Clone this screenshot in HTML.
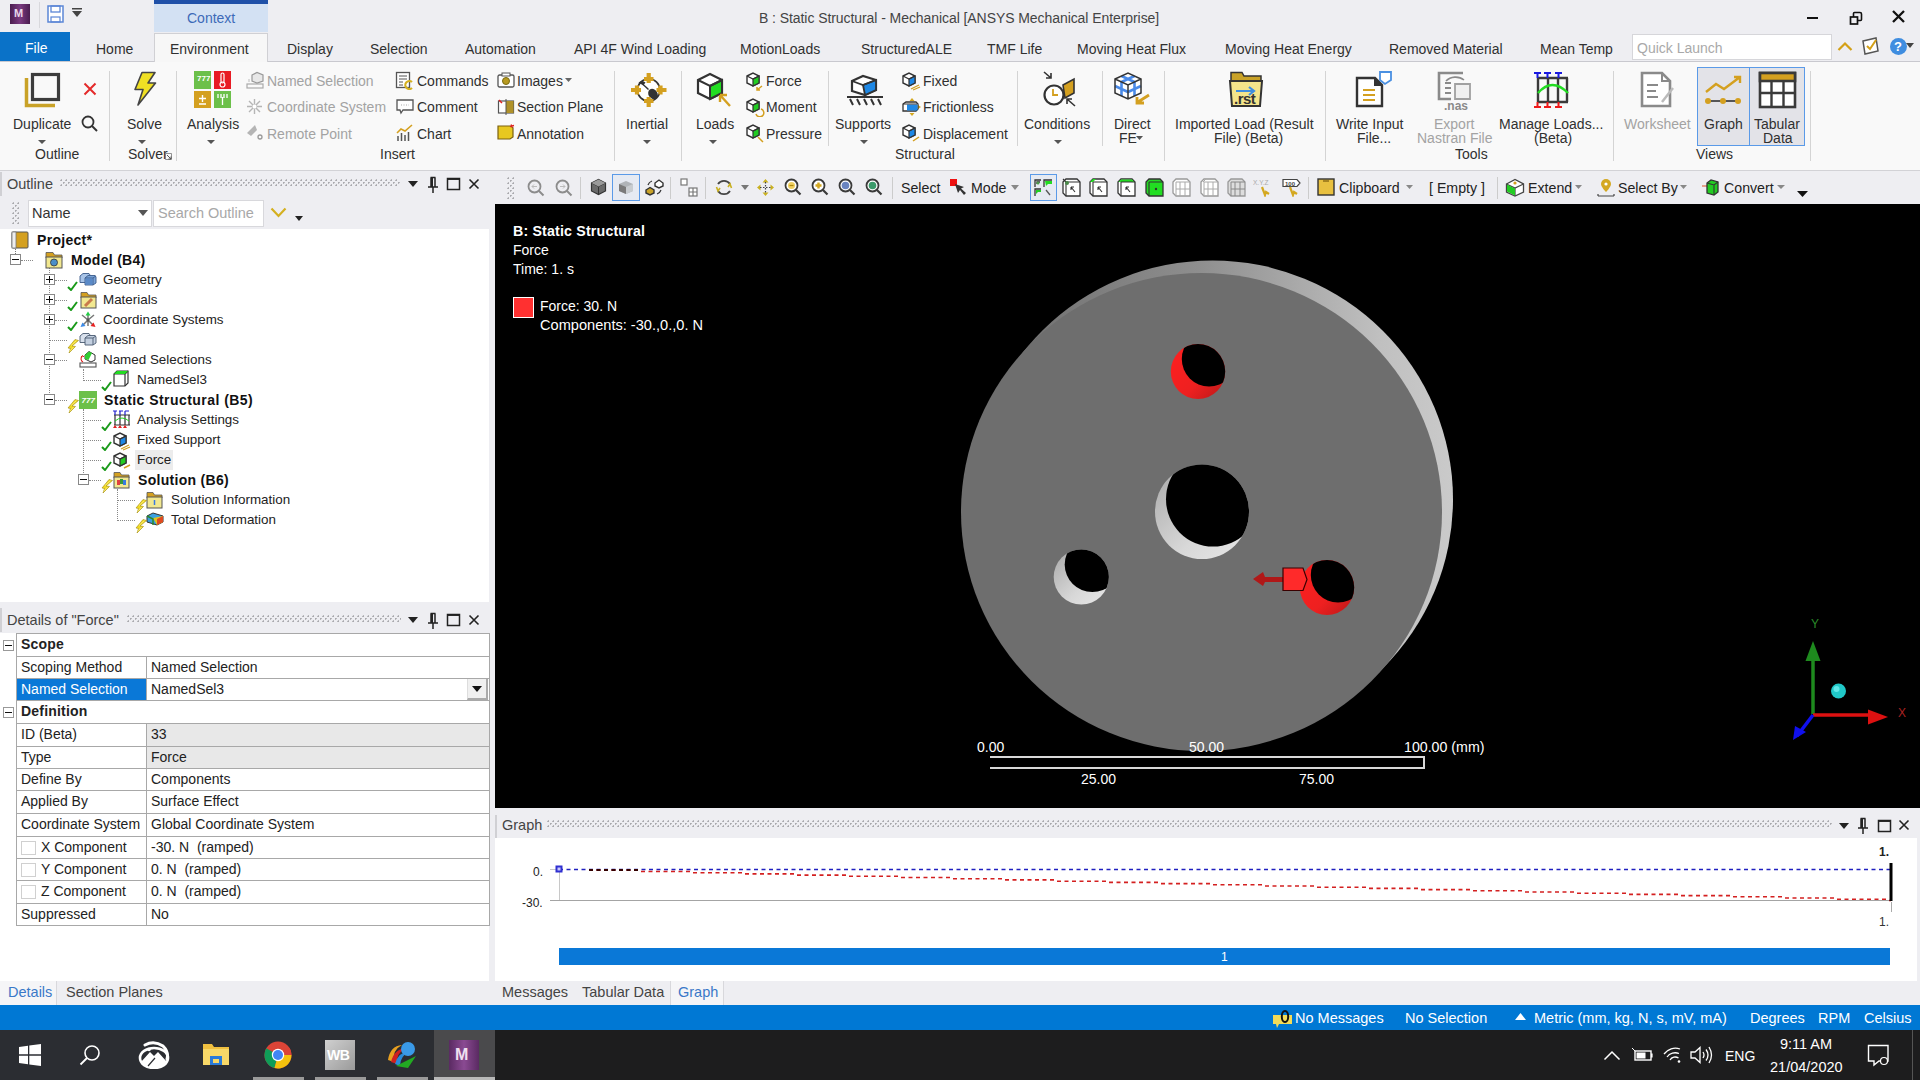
<!DOCTYPE html>
<html><head><meta charset="utf-8">
<style>
*{margin:0;padding:0;box-sizing:border-box}
html,body{width:1920px;height:1080px;overflow:hidden;background:#eeeef2;font-family:"Liberation Sans",sans-serif;color:#303030;font-size:14px}
.a{position:absolute}
.t{position:absolute;white-space:nowrap;line-height:1;font-size:14px}
.tr{font-size:13.4px;color:#222}
.tb{font-size:14.2px;color:#222}
.ts{font-size:14.5px;color:#fff}
</style></head><body>
<!-- TITLE BAR -->
<div class="a" style="left:0;top:0;width:1920px;height:32px;background:#eeeef2"></div>
<div class="a" style="left:10px;top:4px;width:20px;height:20px;background:linear-gradient(90deg,#4a1d4f,#7a3a80 50%,#4a1d4f)"></div>
<div class="t" style="left:14px;top:8px;font-size:11px;font-weight:bold;color:#e8d8ea">M</div>
<div class="a" style="left:39px;top:2px;width:1px;height:26px;background:#d8d8dc"></div>
<svg class="a" style="left:47px;top:5px" width="18" height="18" viewBox="0 0 18 18"><rect x="1" y="1" width="15" height="16" fill="#fff" stroke="#5b86d6" stroke-width="1.5"/><rect x="4" y="1" width="9" height="6" fill="none" stroke="#5b86d6" stroke-width="1.3"/><rect x="4" y="12" width="9" height="5" fill="none" stroke="#5b86d6" stroke-width="1.2"/></svg>
<svg class="a" style="left:71px;top:8px" width="12" height="10" viewBox="0 0 12 10"><rect x="1" y="0" width="10" height="1.5" fill="#444"/><path d="M1 3 L11 3 L6 9 Z" fill="#444"/></svg>
<div class="a" style="left:154px;top:0;width:114px;height:32px;background:#d3e1f3"></div>
<div class="a" style="left:154px;top:0;width:114px;height:4px;background:#1f50a8"></div>
<div class="t" style="left:187px;top:11px;font-size:14px;color:#3d6ab8">Context</div>
<div class="t" style="left:759px;top:11px;font-size:14px;color:#444;letter-spacing:-0.07px">B : Static Structural - Mechanical [ANSYS Mechanical Enterprise]</div>
<div class="a" style="left:1807px;top:17px;width:11px;height:2px;background:#111"></div>
<svg class="a" style="left:1849px;top:11px" width="14" height="14" viewBox="0 0 14 14"><rect x="1.5" y="6" width="7" height="7" fill="none" stroke="#111" stroke-width="1.7"/><path d="M4.5 6 V2.5 Q4.5 1.5 5.5 1.5 H11 Q12.5 1.5 12.5 3 V8.5 Q12.5 9.5 11.5 9.5 H8.5" fill="none" stroke="#111" stroke-width="1.6"/></svg>
<svg class="a" style="left:1891px;top:9px" width="15" height="15" viewBox="0 0 15 15"><path d="M2 2 L13 13 M13 2 L2 13" stroke="#111" stroke-width="2.3"/></svg>

<!-- TABS ROW -->
<div class="a" style="left:0;top:61px;width:1920px;height:1px;background:#c9c9cf"></div>
<div class="a" style="left:0;top:32px;width:70px;height:29px;background:#0a72c8"></div>
<div class="t" style="left:25px;top:41px;font-size:14px;color:#fff">File</div>
<div class="a" style="left:154px;top:33px;width:114px;height:29px;background:#f7f7f7;border:1px solid #d0d0d4;border-bottom:none"></div>
<div class="t" style="left:96px;top:42px;font-size:14px;color:#303030">Home</div>
<div class="t" style="left:170px;top:42px;font-size:14px;color:#303030">Environment</div>
<div class="t" style="left:287px;top:42px;font-size:14px;color:#303030">Display</div>
<div class="t" style="left:370px;top:42px;font-size:14px;color:#303030">Selection</div>
<div class="t" style="left:465px;top:42px;font-size:14px;color:#303030">Automation</div>
<div class="t" style="left:574px;top:42px;font-size:14px;color:#303030">API 4F Wind Loading</div>
<div class="t" style="left:740px;top:42px;font-size:14px;color:#303030">MotionLoads</div>
<div class="t" style="left:861px;top:42px;font-size:14px;color:#303030">StructuredALE</div>
<div class="t" style="left:987px;top:42px;font-size:14px;color:#303030">TMF Life</div>
<div class="t" style="left:1077px;top:42px;font-size:14px;color:#303030">Moving Heat Flux</div>
<div class="t" style="left:1225px;top:42px;font-size:14px;color:#303030">Moving Heat Energy</div>
<div class="t" style="left:1389px;top:42px;font-size:14px;color:#303030">Removed Material</div>
<div class="t" style="left:1540px;top:42px;font-size:14px;color:#303030">Mean Temp</div>
<div class="a" style="left:1632px;top:34px;width:200px;height:26px;background:#fff;border:1px solid #d6d6da"></div>
<div class="t" style="left:1637px;top:41px;font-size:14px;color:#a9a9a9">Quick Launch</div>
<svg class="a" style="left:1837px;top:40px" width="16" height="12" viewBox="0 0 16 12"><path d="M1.5 10 L8 3.5 L14.5 10" fill="none" stroke="#d4a017" stroke-width="2.2"/></svg>
<svg class="a" style="left:1861px;top:36px" width="20" height="20" viewBox="0 0 20 20"><path d="M2 5 L15 2 L17 15 L4 18 Z" fill="#fff" stroke="#555" stroke-width="1.5"/><path d="M6 10 L9 13 L15 4" fill="none" stroke="#d4a017" stroke-width="2"/></svg>
<div class="a" style="left:1890px;top:38px;width:17px;height:17px;border-radius:50%;background:#3f8de0"></div>
<div class="t" style="left:1894px;top:40px;font-size:13px;font-weight:bold;color:#fff">?</div>
<svg class="a" style="left:1906px;top:43px" width="8" height="6" viewBox="0 0 8 6"><path d="M0 0 H8 L4 5 Z" fill="#444"/></svg>
<!-- RIBBON -->
<div class="a" style="left:0;top:62px;width:1920px;height:108px;background:#f9f9f9"></div>
<div class="a" style="left:0;top:170px;width:1920px;height:1px;background:#d2d2d6"></div>
<svg width="0" height="0" style="position:absolute">
<defs>
<g id="cubeG"><path d="M2 5 L8 2 L14 5 L14 12 L8 15 L2 12 Z" fill="#fff" stroke="#333" stroke-width="1.4"/><path d="M8 8 L14 5 L14 12 L8 15 Z" fill="#22cc22" stroke="#333" stroke-width="1.2"/><path d="M2 5 L8 8 L14 5" fill="none" stroke="#333" stroke-width="1.2"/></g>
<g id="cubeB"><path d="M2 5 L8 2 L14 5 L14 12 L8 15 L2 12 Z" fill="#fff" stroke="#333" stroke-width="1.4"/><path d="M8 8 L14 5 L14 12 L8 15 Z" fill="#1e88e5" stroke="#333" stroke-width="1.2"/><path d="M2 5 L8 8 L14 5" fill="none" stroke="#333" stroke-width="1.2"/></g>
<g id="arr"><path d="M0 0 H8 L4 4 Z" fill="#555"/></g>
<g id="chk"><path d="M1 7 L4 10 L10 2" fill="none" stroke="#1a9a1a" stroke-width="2"/></g>
<g id="bolt"><path d="M8 0.5 L11.5 1.5 L5 7 L8.5 7.5 L2 14 L3.5 9.5 L1 9 Z" fill="#f0d820" stroke="#a08a10" stroke-width="0.6"/><path d="M9.5 1.5 L4 6.5 M6.5 8 L2.5 12.5" stroke="#fff8a0" stroke-width="0.6"/></g>
</defs></svg>
<!-- separators -->
<div class="a" style="left:109px;top:71px;width:1px;height:90px;background:#d4d4d4"></div>
<div class="a" style="left:176px;top:71px;width:1px;height:90px;background:#d4d4d4"></div>
<div class="a" style="left:614px;top:71px;width:1px;height:90px;background:#d4d4d4"></div>
<div class="a" style="left:681px;top:71px;width:1px;height:90px;background:#d4d4d4"></div>
<div class="a" style="left:828px;top:71px;width:1px;height:75px;background:#d4d4d4"></div>
<div class="a" style="left:1017px;top:71px;width:1px;height:75px;background:#d4d4d4"></div>
<div class="a" style="left:1102px;top:71px;width:1px;height:75px;background:#d4d4d4"></div>
<div class="a" style="left:1164px;top:71px;width:1px;height:90px;background:#d4d4d4"></div>
<div class="a" style="left:1325px;top:71px;width:1px;height:90px;background:#d4d4d4"></div>
<div class="a" style="left:1613px;top:71px;width:1px;height:90px;background:#d4d4d4"></div>
<div class="a" style="left:1810px;top:71px;width:1px;height:90px;background:#d4d4d4"></div>

<!-- Outline group -->
<svg class="a" style="left:24px;top:72px" width="38" height="37" viewBox="0 0 38 37"><path d="M2.5 6 V33.5 H31" fill="none" stroke="#c9a227" stroke-width="3.5"/><rect x="8.5" y="2.5" width="26" height="25" fill="#f9f9f9" stroke="#3c3c3c" stroke-width="3.2"/></svg>
<svg class="a" style="left:83px;top:82px" width="14" height="14" viewBox="0 0 14 14"><path d="M1.5 1.5 L12.5 12.5 M12.5 1.5 L1.5 12.5" stroke="#e42a2a" stroke-width="2"/></svg>
<svg class="a" style="left:81px;top:115px" width="18" height="18" viewBox="0 0 18 18"><circle cx="7" cy="7" r="5.5" fill="none" stroke="#333" stroke-width="1.8"/><path d="M11 11 L16 16" stroke="#333" stroke-width="2"/></svg>
<div class="t" style="left:13px;top:117px">Duplicate</div>
<svg class="a" style="left:38px;top:140px" width="8" height="4"><use href="#arr"/></svg>
<div class="t" style="left:35px;top:147px">Outline</div>
<!-- Solver group -->
<svg class="a" style="left:133px;top:71px" width="24" height="36" viewBox="0 0 24 36"><path d="M9 1.5 L22 1.5 L15 12 L22.5 12 L5 34 L10 18.5 L2 18.5 Z" fill="#f0e024" stroke="#444" stroke-width="1.6" stroke-linejoin="round"/></svg>
<div class="t" style="left:127px;top:117px">Solve</div>
<svg class="a" style="left:138px;top:140px" width="8" height="4"><use href="#arr"/></svg>
<div class="t" style="left:128px;top:147px">Solver</div>
<svg class="a" style="left:165px;top:153px" width="7" height="7" viewBox="0 0 7 7"><path d="M0.5 0.5 H6.5 V6.5 H0.5 Z" fill="none" stroke="#777" stroke-width="0.8"/><path d="M2 2 L6 6 M6 3.5 V6 H3.5" stroke="#555" stroke-width="1" fill="none"/></svg>
<!-- Insert group -->
<div class="a" style="left:194px;top:71px;width:17px;height:18px;background:#6cc04a"></div>
<div class="a" style="left:214px;top:71px;width:17px;height:18px;background:#e81c24"></div>
<div class="a" style="left:194px;top:91px;width:17px;height:17px;background:#d4a020"></div>
<div class="a" style="left:214px;top:91px;width:17px;height:17px;background:#6cc04a"></div>
<div class="t" style="left:197px;top:75px;font-size:8px;color:#fff;font-weight:bold">777</div>
<svg class="a" style="left:217px;top:72px" width="11" height="16" viewBox="0 0 11 16"><rect x="4" y="1" width="3" height="10" rx="1.5" fill="none" stroke="#fff" stroke-width="1.2"/><circle cx="5.5" cy="12.5" r="2.5" fill="none" stroke="#fff" stroke-width="1.2"/></svg>
<svg class="a" style="left:196px;top:93px" width="13" height="13" viewBox="0 0 13 13"><path d="M6.5 2 V9 M3 5.5 H10 M3 11 H10" stroke="#fff" stroke-width="1.4"/></svg>
<svg class="a" style="left:216px;top:93px" width="13" height="13" viewBox="0 0 13 13"><path d="M2 1 V5 M5 1 V5 M8 1 V5 M11 1 V5 M6.5 4 V12" stroke="#fff" stroke-width="1.3"/></svg>
<div class="t" style="left:187px;top:117px">Analysis</div>
<svg class="a" style="left:207px;top:140px" width="8" height="4"><use href="#arr"/></svg>

<svg class="a" style="left:246px;top:71px" width="19" height="18" viewBox="0 0 19 18"><rect x="1" y="13" width="16" height="4" fill="none" stroke="#aaa" stroke-width="1.2"/><path d="M6 4 L11 1.5 L17 4 L17 10 L11 12 L6 10 Z" fill="#e8e8e8" stroke="#999" stroke-width="1.2"/><path d="M3 8 V11" stroke="#bbb"/></svg>
<div class="t" style="left:267px;top:74px;color:#a3a3a3">Named Selection</div>
<svg class="a" style="left:246px;top:98px" width="17" height="17" viewBox="0 0 17 17"><path d="M8.5 1 V16 M1 8.5 H16 M3 3 L14 14 M14 3 L3 14" stroke="#b5b5b5" stroke-width="1.4"/><circle cx="8.5" cy="8.5" r="2" fill="#fff"/></svg>
<div class="t" style="left:267px;top:100px;color:#a3a3a3">Coordinate System</div>
<svg class="a" style="left:246px;top:124px" width="18" height="17" viewBox="0 0 18 17"><path d="M1 9 L9 1 L11 6 L5 12 Z" fill="#b5b5b5"/><circle cx="14" cy="13" r="2" fill="none" stroke="#999" stroke-width="1.3"/></svg>
<div class="t" style="left:267px;top:127px;color:#a3a3a3">Remote Point</div>

<svg class="a" style="left:395px;top:71px" width="19" height="19" viewBox="0 0 19 19"><rect x="1.5" y="1.5" width="13" height="15" fill="#fff" stroke="#555" stroke-width="1.3"/><path d="M4 5 H12 M4 8 H12 M4 11 H8 M4 14 H8" stroke="#555" stroke-width="1"/><path d="M17 11 A4 4 0 1 0 17 17" fill="none" stroke="#d4b020" stroke-width="2.2"/></svg>
<div class="t" style="left:417px;top:74px">Commands</div>
<svg class="a" style="left:396px;top:99px" width="18" height="16" viewBox="0 0 18 16"><path d="M1 1 H17 V11 H7 L5 14 L4 11 H1 Z" fill="#fff" stroke="#555" stroke-width="1.3"/><path d="M5 6 H13" stroke="#aaa" stroke-dasharray="1 1.5"/></svg>
<div class="t" style="left:417px;top:100px">Comment</div>
<svg class="a" style="left:396px;top:124px" width="18" height="18" viewBox="0 0 18 18"><path d="M2 17 V12 M5.5 17 V9 M9 17 V11 M12.5 17 V8" stroke="#555" stroke-width="1.5"/><path d="M1 9 L5 5 L9 7 L16 1" fill="none" stroke="#d4a020" stroke-width="1.6"/></svg>
<div class="t" style="left:417px;top:127px">Chart</div>

<svg class="a" style="left:497px;top:72px" width="18" height="16" viewBox="0 0 18 16"><rect x="1" y="3" width="16" height="12" rx="1.5" fill="#fff" stroke="#555" stroke-width="1.3"/><rect x="5" y="1" width="8" height="3" fill="#fff" stroke="#555" stroke-width="1"/><circle cx="9" cy="9" r="3.5" fill="#b89a20" stroke="#7a6a10"/></svg>
<div class="t" style="left:517px;top:74px">Images</div>
<svg class="a" style="left:565px;top:78px" width="7" height="4"><path d="M0 0 H7 L3.5 4 Z" fill="#666"/></svg>
<svg class="a" style="left:497px;top:98px" width="18" height="18" viewBox="0 0 18 18"><rect x="1.5" y="3" width="15" height="12" fill="#fff" stroke="#555" stroke-width="1.2"/><path d="M9 3 H16.5 V15 H9 Z" fill="#b0922a"/><path d="M9 1 V17" stroke="#555"/><path d="M2 2 L5 5" stroke="#e02020" stroke-width="1.5"/></svg>
<div class="t" style="left:517px;top:100px">Section Plane</div>
<svg class="a" style="left:497px;top:124px" width="18" height="16" viewBox="0 0 18 16"><path d="M1 2 H14 L16 4 V13 L13 15 H1 Z" fill="#e8c820" stroke="#7a6010" stroke-width="1.2"/><path d="M14 0.5 L16 3.5 M17 1.5 L13 2.5" stroke="#e02020" stroke-width="1.3"/></svg>
<div class="t" style="left:517px;top:127px">Annotation</div>
<div class="t" style="left:380px;top:147px">Insert</div>

<!-- Inertial -->
<svg class="a" style="left:630px;top:72px" width="37" height="36" viewBox="0 0 37 36"><circle cx="18.7" cy="18" r="11.2" fill="#fff" stroke="#333" stroke-width="1.6"/><path d="M8.5 10.5 Q12 7.5 15.5 10.5 L14 12.5 Q17 15 19 17 L18 18 Q15 15 12.5 13 Z" fill="#333"/><ellipse cx="23" cy="22" rx="4.5" ry="5.5" transform="rotate(-35 23 22)" fill="#333"/><path d="M18.7 1 V11 M14 7 H23.5 M18.7 25 V35 M14 29 H23.5 M1 18 H11 M7 13.5 V22.5 M26.5 18 H36.5 M30.5 13.5 V22.5" stroke="#d4a020" stroke-width="4.2"/></svg>
<div class="t" style="left:626px;top:117px">Inertial</div>
<svg class="a" style="left:643px;top:140px" width="8" height="4"><use href="#arr"/></svg>
<!-- Loads -->
<svg class="a" style="left:696px;top:72px" width="37" height="36" viewBox="0 0 37 36"><path d="M2 8 L14 2 L26 8 L26 21 L14 27 L2 21 Z" fill="#fff" stroke="#333" stroke-width="2.2"/><path d="M14 14 L26 8 L26 21 L14 27 Z" fill="#22dd22" stroke="#333" stroke-width="2"/><path d="M2 8 L14 14 L26 8" fill="none" stroke="#333" stroke-width="2"/><path d="M24 23 L34 34 M24 23 L24 30 M24 23 L31 23" stroke="#d4a020" stroke-width="2.4" fill="none"/></svg>
<div class="t" style="left:696px;top:117px">Loads</div>
<svg class="a" style="left:709px;top:140px" width="8" height="4"><use href="#arr"/></svg>
<svg class="a" style="left:745px;top:71px" width="20" height="20" viewBox="0 0 20 20"><use href="#cubeG"/><path d="M17 15 L12 19 M12 16 V19 H15" stroke="#d4a020" stroke-width="1.5" fill="none"/></svg>
<div class="t" style="left:766px;top:74px">Force</div>
<svg class="a" style="left:745px;top:97px" width="20" height="20" viewBox="0 0 20 20"><use href="#cubeG"/><path d="M16 12 A4 4 0 1 1 11 17" stroke="#d4a020" stroke-width="1.5" fill="none"/></svg>
<div class="t" style="left:766px;top:100px">Moment</div>
<svg class="a" style="left:745px;top:123px" width="20" height="20" viewBox="0 0 20 20"><use href="#cubeG"/><path d="M13 14 L18 19" stroke="#d4a020" stroke-width="1.5"/></svg>
<div class="t" style="left:766px;top:127px">Pressure</div>
<!-- Supports -->
<svg class="a" style="left:846px;top:74px" width="38" height="34" viewBox="0 0 38 34"><path d="M6 7 L17 2 L30 6 L30 16 L19 21 L6 17 Z" fill="#fff" stroke="#333" stroke-width="2.2"/><path d="M17 11 L30 6 L30 16 L19 21 Z" fill="#1e88e5" stroke="#333" stroke-width="1.8"/><path d="M6 7 L17 11 L30 6" fill="none" stroke="#333" stroke-width="1.8"/><path d="M1 23 H37" stroke="#333" stroke-width="2.2"/><path d="M4 25 L7 31 M11 25 L14 31 M18 25 L21 31 M25 25 L28 31 M32 25 L35 31" stroke="#333" stroke-width="2"/></svg>
<div class="t" style="left:835px;top:117px">Supports</div>
<svg class="a" style="left:860px;top:140px" width="8" height="4"><use href="#arr"/></svg>
<svg class="a" style="left:901px;top:71px" width="20" height="20" viewBox="0 0 20 20"><use href="#cubeB"/><path d="M10 18 L18 14 M12 19 L19 16" stroke="#d4a020" stroke-width="1.3"/></svg>
<div class="t" style="left:923px;top:74px">Fixed</div>
<svg class="a" style="left:901px;top:97px" width="21" height="20" viewBox="0 0 21 20"><path d="M11 1 L8.5 4 H13.5 Z M11 19 L8.5 16 H13.5 Z M20 10 L17 8 V12 Z" fill="#d4a820"/><path d="M2 7 L5 5 H15 L17 7 V12 L15 14 H2 Z" fill="#fff" stroke="#333" stroke-width="1.3"/><path d="M6 7.5 H16.5 V13.5 H6 Z" fill="#1e88e5"/><path d="M2 7 H16" stroke="#333" stroke-width="1"/></svg>
<div class="t" style="left:923px;top:100px">Frictionless</div>
<svg class="a" style="left:901px;top:123px" width="20" height="20" viewBox="0 0 20 20"><use href="#cubeB"/><path d="M12 18 L18 14" stroke="#d4a020" stroke-width="1.5"/></svg>
<div class="t" style="left:923px;top:127px">Displacement</div>
<div class="t" style="left:895px;top:147px">Structural</div>
<!-- Conditions -->
<svg class="a" style="left:1041px;top:71px" width="36" height="37" viewBox="0 0 36 37"><path d="M22 14 L33 8 L33 22 L24 27 Z" fill="#d4a020" stroke="#333" stroke-width="1.6"/><circle cx="13" cy="24" r="9.5" fill="#fff" stroke="#333" stroke-width="2.2"/><path d="M12 18 V24 H17" stroke="#d4a020" stroke-width="1.8" fill="none"/><path d="M3 1 L10 7 M10 2 V7 H5" stroke="#333" stroke-width="1.6" fill="none"/><path d="M34 35 L26 28 M26 33 V28 H31" stroke="#333" stroke-width="1.6" fill="none"/></svg>
<div class="t" style="left:1024px;top:117px">Conditions</div>
<svg class="a" style="left:1054px;top:140px" width="8" height="4"><use href="#arr"/></svg>
<!-- Direct FE -->
<svg class="a" style="left:1113px;top:71px" width="38" height="37" viewBox="0 0 38 37"><path d="M2 8 L15 2 L28 8 L28 22 L15 28 L2 22 Z" fill="#fff"/><path d="M8.5 11 V25 M21.5 11 V25 M2 15 L15 21 L28 15 M8.5 5 L21.5 11 M21.5 5 L8.5 11" fill="none" stroke="#4a8ae8" stroke-width="2.6"/><path d="M2 8 L15 2 L28 8 L28 22 L15 28 L2 22 Z M2 8 L15 14 L28 8 M15 14 V28" fill="none" stroke="#333" stroke-width="1.5"/><path d="M36 24 L25 31 M24 26 V32 H31" stroke="#d4a020" stroke-width="2.8" fill="none"/></svg>
<div class="t" style="left:1114px;top:117px">Direct</div>
<div class="t" style="left:1119px;top:131px">FE</div>
<svg class="a" style="left:1136px;top:136px" width="7" height="4"><path d="M0 0 H7 L3.5 4 Z" fill="#555"/></svg>
<!-- Imported Load -->
<svg class="a" style="left:1228px;top:71px" width="36" height="37" viewBox="0 0 36 37"><path d="M3 1.5 H14 L16 5 H33 V10 H3 Z" fill="#c9a227" stroke="#333" stroke-width="1.5"/><path d="M2 10 H34 L32 35 H4 Z" fill="#f4e48a" stroke="#333" stroke-width="2"/><path d="M8 20 H26 M21 16 L26 20 L21 24" stroke="#3f8de0" stroke-width="2.2" fill="none"/><text x="6" y="33" font-family="Liberation Sans" font-size="15" font-weight="bold" fill="#333" letter-spacing="-0.5">.rst</text></svg>
<div class="t" style="left:1175px;top:117px">Imported Load (Result</div>
<div class="t" style="left:1214px;top:131px">File) (Beta)</div>
<!-- Write Input File -->
<svg class="a" style="left:1355px;top:71px" width="38" height="37" viewBox="0 0 38 37"><path d="M2 7 H20 L27 14 V35 H2 Z" fill="#fff" stroke="#333" stroke-width="2.4"/><path d="M20 7 V14 H27" fill="#333" stroke="#333" stroke-width="2"/><path d="M8 19 H20 M8 24 H20 M8 29 H20" stroke="#d4a020" stroke-width="2.2"/><path d="M25 1 H36 V9 L30 13 L25 9 Z" fill="#fff" stroke="#4a90e2" stroke-width="1.8"/></svg>
<div class="t" style="left:1336px;top:117px">Write Input</div>
<div class="t" style="left:1357px;top:131px">File...</div>
<!-- Export Nastran -->
<svg class="a" style="left:1437px;top:70px" width="36" height="41" viewBox="0 0 36 41"><path d="M26 3 H2 V29 H14" fill="none" stroke="#8a8a8a" stroke-width="2.6"/><path d="M8 13 H14 M8 18 H14 M8 23 H14" stroke="#8a8a8a" stroke-width="1.8"/><path d="M9 11 A12 10 0 0 1 27 10" fill="none" stroke="#8a8a8a" stroke-width="1.6"/><path d="M18 14 H33 V29 H18 Z" fill="#f0f0f0" stroke="#a0a0a0" stroke-width="1.8"/><text x="7" y="40" font-family="Liberation Sans" font-size="12" font-weight="bold" fill="#8a8a8a">.nas</text></svg>
<div class="t" style="left:1434px;top:117px;color:#a3a3a3">Export</div>
<div class="t" style="left:1417px;top:131px;color:#a3a3a3">Nastran File</div>
<div class="t" style="left:1455px;top:147px">Tools</div>
<!-- Manage Loads -->
<svg class="a" style="left:1533px;top:71px" width="40" height="38" viewBox="0 0 40 38"><path d="M4 7 H35 M4 31 H35 M5 7 V31 M15 7 V31 M25 7 V31 M34 7 V31" stroke="#3a3a3a" stroke-width="2.4"/><path d="M1 2 H8 M11 2 H18 M22 2 H29 M4.5 2 V7 M14.5 2 V7 M25.5 2 V7" stroke="#1a1ae0" stroke-width="2"/><path d="M1 36 H8 M11 36 H18 M22 36 H29 M4.5 31 V36 M14.5 31 V36 M25.5 31 V36" stroke="#ee1a1a" stroke-width="2"/><path d="M5 22 Q19 6 35 22" fill="none" stroke="#22dd22" stroke-width="2.4"/></svg>
<div class="t" style="left:1499px;top:117px">Manage Loads...</div>
<div class="t" style="left:1534px;top:131px">(Beta)</div>
<!-- Views -->
<svg class="a" style="left:1640px;top:71px" width="36" height="38" viewBox="0 0 36 38"><path d="M2 2 H22 L30 10 V35 H2 Z" fill="#fff" stroke="#8a8a8a" stroke-width="2.6"/><path d="M22 2 V10 H30" fill="none" stroke="#8a8a8a" stroke-width="2"/><path d="M7 14 H18 M7 20 H16 M7 26 H18" stroke="#8a8a8a" stroke-width="2.2"/><path d="M22 31 L33 17" stroke="#bbb" stroke-width="2.5"/></svg>
<div class="t" style="left:1624px;top:117px;color:#a3a3a3">Worksheet</div>
<div class="a" style="left:1697px;top:67px;width:53px;height:79px;background:#e3e3e8;border:1px solid #5a9ae8"></div>
<div class="a" style="left:1749px;top:67px;width:56px;height:79px;background:#e3e3e8;border:1px solid #5a9ae8"></div>
<svg class="a" style="left:1704px;top:74px" width="40" height="32" viewBox="0 0 40 32"><path d="M2 18 L12 10 L20 15 L36 3 M30 3 H36 V9" fill="none" stroke="#d4a020" stroke-width="2.4"/><path d="M3 27 H35" stroke="#333" stroke-width="1.6"/><circle cx="4" cy="27" r="3" fill="#d4a020"/><circle cx="19" cy="27" r="3" fill="#d4a020"/><circle cx="34" cy="27" r="3" fill="#d4a020"/></svg>
<div class="t" style="left:1704px;top:117px">Graph</div>
<svg class="a" style="left:1758px;top:71px" width="39" height="38" viewBox="0 0 39 38"><rect x="2" y="2" width="35" height="34" fill="#fff" stroke="#3a3a3a" stroke-width="2.6"/><rect x="2" y="2" width="35" height="8" fill="#d4a020" stroke="#3a3a3a" stroke-width="2.6"/><path d="M2 22 H37 M13.5 10 V36 M25.5 10 V36" stroke="#3a3a3a" stroke-width="2.4"/></svg>
<div class="t" style="left:1754px;top:117px">Tabular</div>
<div class="t" style="left:1763px;top:131px">Data</div>
<div class="t" style="left:1696px;top:147px">Views</div>
<!-- OUTLINE PANEL -->
<div class="a" style="left:0;top:171px;width:490px;height:58px;background:#eeeef2"></div>
<div class="a" style="left:0;top:229px;width:489px;height:373px;background:#fff"></div>
<div class="a" style="left:0;top:172px;width:2px;height:24px;background:#d0d0d4"></div>
<div class="t" style="left:7px;top:177px;font-size:14.5px;color:#444">Outline</div>
<div class="a" style="left:60px;top:179px;width:340px;height:8px;background-image:radial-gradient(circle at 1.25px 1.25px,#a8a8ac 0.7px,transparent 1.1px),radial-gradient(circle at 3.75px 3.75px,#a8a8ac 0.7px,transparent 1.1px);background-size:5px 5px"></div>
<svg class="a" style="left:407px;top:180px" width="12" height="8"><path d="M1 1 H11 L6 7 Z" fill="#222"/></svg>
<svg class="a" style="left:426px;top:176px" width="14" height="18" viewBox="0 0 14 18"><path d="M4.5 1.5 H9.5 M5 1.5 V11 M9 1.5 V11 M2 11 H12 M7 11 V17" stroke="#222" stroke-width="1.5" fill="none"/><rect x="5" y="2" width="2" height="9" fill="#222"/></svg>
<svg class="a" style="left:446px;top:177px" width="15" height="14" viewBox="0 0 15 14"><rect x="1.5" y="1.5" width="12" height="11" fill="none" stroke="#222" stroke-width="1.5"/><path d="M1.5 2.2 H13.5" stroke="#222" stroke-width="1.5"/></svg>
<svg class="a" style="left:467px;top:177px" width="14" height="14" viewBox="0 0 14 14"><path d="M2.5 2.5 L11.5 11.5 M11.5 2.5 L2.5 11.5" stroke="#222" stroke-width="1.6"/></svg>
<div class="a" style="left:12px;top:202px;width:8px;height:22px;background-image:radial-gradient(circle at 1.25px 1.25px,#a8a8ac 0.7px,transparent 1.1px),radial-gradient(circle at 3.75px 3.75px,#a8a8ac 0.7px,transparent 1.1px);background-size:5px 5px"></div>
<div class="a" style="left:28px;top:200px;width:124px;height:27px;background:#fff;border:1px solid #d8d8dc"></div>
<div class="t" style="left:32px;top:206px;font-size:14.5px;color:#333">Name</div>
<svg class="a" style="left:138px;top:210px" width="10" height="6"><path d="M0 0 H10 L5 6 Z" fill="#555"/></svg>
<div class="a" style="left:153px;top:200px;width:111px;height:27px;background:#fff;border:1px solid #d8d8dc"></div>
<div class="t" style="left:158px;top:206px;font-size:14.5px;color:#a8a8a8">Search Outline</div>
<svg class="a" style="left:270px;top:207px" width="17" height="11" viewBox="0 0 17 11"><path d="M1.5 1.5 L8.5 9 L15.5 1.5" fill="none" stroke="#d4b020" stroke-width="2.2"/></svg>
<svg class="a" style="left:295px;top:216px" width="8" height="6"><path d="M0 0 H8 L4 5 Z" fill="#222"/></svg>

<!-- tree lines -->
<div class="a" style="left:15px;top:249px;width:1px;height:7px;border-left:1px dotted #777"></div>
<div class="a" style="left:49px;top:266px;width:1px;height:129px;border-left:1px dotted #888"></div>
<div class="a" style="left:21px;top:260px;width:12px;height:1px;border-top:1px dotted #888"></div>
<div class="a" style="left:55px;top:280px;width:12px;height:1px;border-top:1px dotted #888"></div>
<div class="a" style="left:55px;top:300px;width:12px;height:1px;border-top:1px dotted #888"></div>
<div class="a" style="left:55px;top:320px;width:12px;height:1px;border-top:1px dotted #888"></div>
<div class="a" style="left:49px;top:340px;width:18px;height:1px;border-top:1px dotted #888"></div>
<div class="a" style="left:55px;top:360px;width:12px;height:1px;border-top:1px dotted #888"></div>
<div class="a" style="left:55px;top:400px;width:12px;height:1px;border-top:1px dotted #888"></div>
<div class="a" style="left:83px;top:369px;width:1px;height:10px;border-left:1px dotted #888"></div>
<div class="a" style="left:83px;top:380px;width:18px;height:1px;border-top:1px dotted #888"></div>
<div class="a" style="left:83px;top:409px;width:1px;height:66px;border-left:1px dotted #888"></div>
<div class="a" style="left:83px;top:420px;width:18px;height:1px;border-top:1px dotted #888"></div>
<div class="a" style="left:83px;top:440px;width:18px;height:1px;border-top:1px dotted #888"></div>
<div class="a" style="left:83px;top:460px;width:18px;height:1px;border-top:1px dotted #888"></div>
<div class="a" style="left:89px;top:480px;width:12px;height:1px;border-top:1px dotted #888"></div>
<div class="a" style="left:117px;top:489px;width:1px;height:30px;border-left:1px dotted #888"></div>
<div class="a" style="left:117px;top:500px;width:18px;height:1px;border-top:1px dotted #888"></div>
<div class="a" style="left:117px;top:520px;width:18px;height:1px;border-top:1px dotted #888"></div>
<!-- expanders -->
<div class="a" style="left:10px;top:254px;width:11px;height:11px;border:1px solid #888;background:#fff"></div><div class="a" style="left:12px;top:259px;width:7px;height:1px;background:#111"></div>
<div class="a" style="left:44px;top:274px;width:11px;height:11px;border:1px solid #888;background:#fff"></div><div class="a" style="left:46px;top:279px;width:7px;height:1px;background:#111"></div><div class="a" style="left:49px;top:276px;width:1px;height:7px;background:#111"></div>
<div class="a" style="left:44px;top:294px;width:11px;height:11px;border:1px solid #888;background:#fff"></div><div class="a" style="left:46px;top:299px;width:7px;height:1px;background:#111"></div><div class="a" style="left:49px;top:296px;width:1px;height:7px;background:#111"></div>
<div class="a" style="left:44px;top:314px;width:11px;height:11px;border:1px solid #888;background:#fff"></div><div class="a" style="left:46px;top:319px;width:7px;height:1px;background:#111"></div><div class="a" style="left:49px;top:316px;width:1px;height:7px;background:#111"></div>
<div class="a" style="left:44px;top:354px;width:11px;height:11px;border:1px solid #888;background:#fff"></div><div class="a" style="left:46px;top:359px;width:7px;height:1px;background:#111"></div>
<div class="a" style="left:44px;top:394px;width:11px;height:11px;border:1px solid #888;background:#fff"></div><div class="a" style="left:46px;top:399px;width:7px;height:1px;background:#111"></div>
<div class="a" style="left:78px;top:474px;width:11px;height:11px;border:1px solid #888;background:#fff"></div><div class="a" style="left:80px;top:479px;width:7px;height:1px;background:#111"></div>

<!-- icons -->
<svg class="a" style="left:11px;top:231px" width="18" height="18" viewBox="0 0 18 18"><rect x="1" y="1" width="16" height="16" rx="1" fill="#d4a020" stroke="#555" stroke-width="1"/><rect x="1" y="1" width="4" height="16" fill="#eee" stroke="#777" stroke-width="0.8"/></svg>
<svg class="a" style="left:45px;top:251px" width="18" height="18" viewBox="0 0 18 18"><path d="M1 1.5 H8 L9.5 4 H17 V7 H1 Z" fill="#d4a020" stroke="#555" stroke-width="0.8"/><rect x="1" y="6" width="16" height="11" fill="#f2e890" stroke="#555" stroke-width="1"/><circle cx="9" cy="11.5" r="3.5" fill="#4a8ec8" stroke="#333" stroke-width="0.8"/></svg>
<svg class="a" style="left:79px;top:272px" width="18" height="14" viewBox="0 0 18 14"><path d="M1 4 L4 1.5 H10 L11 3 V8 L8 10.5 H1 Z" fill="#a8c4e8" stroke="#3a5a8a" stroke-width="0.9"/><path d="M6 6 L9 3.5 H16 L17 5 V11 L14 13 H6 Z" fill="#7aa4d8" stroke="#3a5a8a" stroke-width="0.9"/><path d="M6 6 H14 V13 M14 6 L17 3.8" stroke="#3a5a8a" stroke-width="0.9" fill="none"/><path d="M6.5 6.5 H13.5 V12.5 H6.5 Z" fill="#5a8ac8"/></svg>
<svg class="a" style="left:80px;top:291px" width="17" height="18" viewBox="0 0 17 18"><path d="M1 1.5 H7 L8.5 4 H16 V7 H1 Z" fill="#d4a020" stroke="#555" stroke-width="0.8"/><rect x="1" y="6" width="15" height="11" fill="#f2e890" stroke="#555" stroke-width="1"/><path d="M5 15 L12 8" stroke="#c87a4a" stroke-width="3"/></svg>
<svg class="a" style="left:79px;top:311px" width="18" height="18" viewBox="0 0 18 18"><path d="M9 9 V3 M9 9 L3 4 M9 9 L15 4 M9 9 L4 14 M9 9 L14 14 M9 9 V15" stroke="#777" stroke-width="1.5"/><path d="M9 0.5 L6.5 4.5 H11.5 Z" fill="#22cc44"/><path d="M16.5 16 L11.5 15 L14.5 11.5 Z" fill="#e82020"/><path d="M1.5 16 L6.5 15 L3.5 11.5 Z" fill="#3a8ae8"/><circle cx="9" cy="9" r="1.6" fill="#555"/></svg>
<svg class="a" style="left:79px;top:332px" width="18" height="14" viewBox="0 0 18 14"><path d="M1 4 L4 1.5 H10 L11 3 V8 L8 10.5 H1 Z" fill="#d8e0ec" stroke="#4a5a70" stroke-width="0.9"/><path d="M6 6 L9 3.5 H16 L17 5 V11 L14 13 H6 Z" fill="#c4d0e0" stroke="#4a5a70" stroke-width="0.9"/><path d="M6 6 H14 V13 M14 6 L17 3.8" stroke="#4a5a70" stroke-width="0.9" fill="none"/></svg>
<svg class="a" style="left:79px;top:350px" width="18" height="18" viewBox="0 0 18 18"><rect x="1" y="13" width="16" height="4" fill="#fff" stroke="#555" stroke-width="1.1"/><path d="M6 5 L10 1.5 L16 5 L16 10 L12 12 L6 9 Z" fill="#fff" stroke="#333" stroke-width="1"/><path d="M6 5 L10 1.5 L13 3 L9.5 10 L6 9 Z" fill="#33cc33"/><path d="M4 12 A3.5 3.5 0 0 1 3.5 6" fill="none" stroke="#e02020" stroke-width="1.1"/><path d="M2 7 L3.5 5.5 L5 7" fill="none" stroke="#e02020" stroke-width="1"/></svg>
<svg class="a" style="left:113px;top:370px" width="16" height="17" viewBox="0 0 16 17"><path d="M1 4 L4 1 H15 V13 L12 16 H1 Z" fill="#fff" stroke="#333" stroke-width="1.2"/><path d="M1 4 H12 V16 M12 4 L15 1" stroke="#333" stroke-width="1.2" fill="none"/><path d="M4 1 H15 L12 4 H1 Z" fill="#22dd22"/></svg>
<svg class="a" style="left:79px;top:391px" width="18" height="18" viewBox="0 0 18 18"><rect x="0" y="0" width="18" height="18" fill="#6cc04a"/><text x="2.5" y="12" font-family="Liberation Sans" font-size="8" font-style="italic" font-weight="bold" fill="#fff">777</text></svg>
<svg class="a" style="left:113px;top:410px" width="18" height="19" viewBox="0 0 18 19"><path d="M1 5 H17 M1 15 H17 M2 5 V15 M7 5 V15 M12 5 V15 M16 5 V15" stroke="#333" stroke-width="1.2"/><path d="M0 1 H4 M6 1 H10 M12 1 H16 M2 1 V5 M7 1 V5 M12 1 V5" stroke="#2020d0" stroke-width="1.2"/><path d="M2 15 L0 18 H4 Z M7 15 L5 18 H9 Z M12 15 L10 18 H14 Z" fill="#e02020"/><path d="M2 11 Q9 5 16 11" stroke="#22cc22" fill="none"/></svg>
<svg class="a" style="left:112px;top:431px" width="20" height="20" viewBox="0 0 20 20"><use href="#cubeB"/><path d="M9 18 L17 14 M11 19 L18 16" stroke="#d4a020" stroke-width="1.2"/></svg>
<svg class="a" style="left:112px;top:451px" width="20" height="20" viewBox="0 0 20 20"><use href="#cubeG"/><path d="M12 17 L18 14" stroke="#d4a020" stroke-width="1.5"/></svg>
<svg class="a" style="left:113px;top:471px" width="17" height="18" viewBox="0 0 17 18"><path d="M1 1.5 H7 L8.5 4 H16 V7 H1 Z" fill="#d4a020" stroke="#555" stroke-width="0.8"/><rect x="1" y="6" width="15" height="11" fill="#f2e890" stroke="#555" stroke-width="1"/><rect x="4" y="9" width="3" height="5" fill="#e04040"/><rect x="7" y="8" width="3" height="5" fill="#3a9a3a"/><rect x="10" y="9" width="3" height="5" fill="#3a7ae0"/></svg>
<svg class="a" style="left:146px;top:491px" width="17" height="18" viewBox="0 0 17 18"><path d="M1 1.5 H7 L8.5 4 H16 V7 H1 Z" fill="#d4a020" stroke="#555" stroke-width="0.8"/><rect x="1" y="6" width="15" height="11" fill="#f2e890" stroke="#555" stroke-width="1"/><path d="M8.5 9 V14" stroke="#3a7ae0" stroke-width="1.5"/></svg>
<svg class="a" style="left:146px;top:511px" width="18" height="16" viewBox="0 0 18 16"><path d="M1 5 L7 2 L17 5 L17 11 L11 14 L1 11 Z" fill="#3aa0e0" stroke="#333" stroke-width="1"/><path d="M7 7 L17 5 V11 L11 14 Z" fill="#e0c020"/><path d="M11 8 V14 L17 11 V5 Z" fill="#e04a20"/><path d="M1 5 L7 8 L7 14" fill="none" stroke="#2a8a2a" stroke-width="1.5"/></svg>
<!-- checks/bolts -->
<svg class="a" style="left:67px;top:280px" width="11" height="11"><use href="#chk"/></svg>
<svg class="a" style="left:67px;top:300px" width="11" height="11"><use href="#chk"/></svg>
<svg class="a" style="left:67px;top:320px" width="11" height="11"><use href="#chk"/></svg>
<svg class="a" style="left:67px;top:339px" width="12" height="14"><use href="#bolt"/></svg>
<svg class="a" style="left:101px;top:380px" width="11" height="11"><use href="#chk"/></svg>
<svg class="a" style="left:67px;top:399px" width="12" height="14"><use href="#bolt"/></svg>
<svg class="a" style="left:101px;top:420px" width="11" height="11"><use href="#chk"/></svg>
<svg class="a" style="left:101px;top:440px" width="11" height="11"><use href="#chk"/></svg>
<svg class="a" style="left:101px;top:460px" width="11" height="11"><use href="#chk"/></svg>
<svg class="a" style="left:101px;top:479px" width="12" height="14"><use href="#bolt"/></svg>
<svg class="a" style="left:135px;top:499px" width="12" height="14"><use href="#bolt"/></svg>
<svg class="a" style="left:135px;top:519px" width="12" height="14"><use href="#bolt"/></svg>
<!-- labels -->
<div class="a" style="left:135px;top:450px;width:38px;height:20px;background:#ececec"></div>
<div class="t" style="left:37px;top:233px;font-size:14px;font-weight:bold;color:#111;letter-spacing:0.3px">Project*</div>
<div class="t" style="left:71px;top:253px;font-size:14px;font-weight:bold;color:#111;letter-spacing:0.3px">Model (B4)</div>
<div class="t tr" style="left:103px;top:273px">Geometry</div>
<div class="t tr" style="left:103px;top:293px">Materials</div>
<div class="t tr" style="left:103px;top:313px">Coordinate Systems</div>
<div class="t tr" style="left:103px;top:333px">Mesh</div>
<div class="t tr" style="left:103px;top:353px">Named Selections</div>
<div class="t tr" style="left:137px;top:373px">NamedSel3</div>
<div class="t" style="left:104px;top:393px;font-size:14px;font-weight:bold;color:#111;letter-spacing:0.45px">Static Structural (B5)</div>
<div class="t tr" style="left:137px;top:413px">Analysis Settings</div>
<div class="t tr" style="left:137px;top:433px">Fixed Support</div>
<div class="t tr" style="left:137px;top:453px">Force</div>
<div class="t" style="left:138px;top:473px;font-size:14px;font-weight:bold;color:#111;letter-spacing:0.3px">Solution (B6)</div>
<div class="t tr" style="left:171px;top:493px">Solution Information</div>
<div class="t tr" style="left:171px;top:513px">Total Deformation</div>
<!-- DETAILS PANEL -->
<div class="a" style="left:0;top:602px;width:490px;height:5px;background:#eeeef2"></div>
<div class="a" style="left:0;top:607px;width:490px;height:26px;background:#eeeef2"></div>
<div class="a" style="left:0;top:608px;width:2px;height:24px;background:#d0d0d4"></div>
<div class="a" style="left:0;top:633px;width:489px;height:348px;background:#fff"></div>
<div class="t" style="left:7px;top:613px;font-size:14.5px;color:#444">Details of "Force"</div>
<div class="a" style="left:127px;top:615px;width:274px;height:8px;background-image:radial-gradient(circle at 1.25px 1.25px,#a8a8ac 0.7px,transparent 1.1px),radial-gradient(circle at 3.75px 3.75px,#a8a8ac 0.7px,transparent 1.1px);background-size:5px 5px"></div>
<svg class="a" style="left:407px;top:616px" width="12" height="8"><path d="M1 1 H11 L6 7 Z" fill="#222"/></svg>
<svg class="a" style="left:426px;top:612px" width="14" height="18" viewBox="0 0 14 18"><path d="M4.5 1.5 H9.5 M5 1.5 V11 M9 1.5 V11 M2 11 H12 M7 11 V17" stroke="#222" stroke-width="1.5" fill="none"/><rect x="5" y="2" width="2" height="9" fill="#222"/></svg>
<svg class="a" style="left:446px;top:613px" width="15" height="14" viewBox="0 0 15 14"><rect x="1.5" y="1.5" width="12" height="11" fill="none" stroke="#222" stroke-width="1.5"/><path d="M1.5 2.2 H13.5" stroke="#222" stroke-width="1.5"/></svg>
<svg class="a" style="left:467px;top:613px" width="14" height="14" viewBox="0 0 14 14"><path d="M2.5 2.5 L11.5 11.5 M11.5 2.5 L2.5 11.5" stroke="#222" stroke-width="1.6"/></svg>
<div class="a" style="left:16px;top:633px;width:474px;height:293px;border:1px solid #a8a8a8;border-top:1px solid #a8a8a8"></div>
<div class="a" style="left:3px;top:640px;width:11px;height:11px;border:1px solid #999;background:#fff"></div><div class="a" style="left:5px;top:645px;width:7px;height:1px;background:#111"></div>
<div class="t" style="left:21px;top:637px;font-size:14px;font-weight:bold;color:#222;letter-spacing:0.2px">Scope</div>
<div class="t" style="left:21px;top:660px;font-size:14px;color:#222">Scoping Method</div>
<div class="t" style="left:151px;top:660px;font-size:14px;color:#222">Named Selection</div>
<div class="a" style="left:146px;top:656px;width:1px;height:22px;background:#a8a8a8"></div>
<div class="a" style="left:17px;top:656px;width:472px;height:1px;background:#a8a8a8"></div>
<div class="a" style="left:17px;top:679px;width:129px;height:21px;background:#0a78d7"></div>
<div class="t" style="left:21px;top:682px;font-size:14px;color:#fff">Named Selection</div>
<div class="t" style="left:151px;top:682px;font-size:14px;color:#222">NamedSel3</div>
<div class="a" style="left:146px;top:678px;width:1px;height:22px;background:#a8a8a8"></div>
<div class="a" style="left:17px;top:678px;width:472px;height:1px;background:#a8a8a8"></div>
<div class="a" style="left:3px;top:707px;width:11px;height:11px;border:1px solid #999;background:#fff"></div><div class="a" style="left:5px;top:712px;width:7px;height:1px;background:#111"></div>
<div class="t" style="left:21px;top:704px;font-size:14px;font-weight:bold;color:#222;letter-spacing:0.2px">Definition</div>
<div class="a" style="left:17px;top:700px;width:472px;height:1px;background:#a8a8a8"></div>
<div class="a" style="left:147px;top:724px;width:342px;height:22px;background:#e8e8e8"></div>
<div class="t" style="left:21px;top:727px;font-size:14px;color:#222">ID (Beta)</div>
<div class="t" style="left:151px;top:727px;font-size:14px;color:#222">33</div>
<div class="a" style="left:146px;top:723px;width:1px;height:23px;background:#a8a8a8"></div>
<div class="a" style="left:17px;top:723px;width:472px;height:1px;background:#a8a8a8"></div>
<div class="a" style="left:147px;top:747px;width:342px;height:21px;background:#e8e8e8"></div>
<div class="t" style="left:21px;top:750px;font-size:14px;color:#222">Type</div>
<div class="t" style="left:151px;top:750px;font-size:14px;color:#222">Force</div>
<div class="a" style="left:146px;top:746px;width:1px;height:22px;background:#a8a8a8"></div>
<div class="a" style="left:17px;top:746px;width:472px;height:1px;background:#a8a8a8"></div>
<div class="t" style="left:21px;top:772px;font-size:14px;color:#222">Define By</div>
<div class="t" style="left:151px;top:772px;font-size:14px;color:#222">Components</div>
<div class="a" style="left:146px;top:768px;width:1px;height:22px;background:#a8a8a8"></div>
<div class="a" style="left:17px;top:768px;width:472px;height:1px;background:#a8a8a8"></div>
<div class="t" style="left:21px;top:794px;font-size:14px;color:#222">Applied By</div>
<div class="t" style="left:151px;top:794px;font-size:14px;color:#222">Surface Effect</div>
<div class="a" style="left:146px;top:790px;width:1px;height:23px;background:#a8a8a8"></div>
<div class="a" style="left:17px;top:790px;width:472px;height:1px;background:#a8a8a8"></div>
<div class="t" style="left:21px;top:817px;font-size:14px;color:#222">Coordinate System</div>
<div class="t" style="left:151px;top:817px;font-size:14px;color:#222">Global Coordinate System</div>
<div class="a" style="left:146px;top:813px;width:1px;height:23px;background:#a8a8a8"></div>
<div class="a" style="left:17px;top:813px;width:472px;height:1px;background:#a8a8a8"></div>
<div class="a" style="left:21px;top:841px;width:15px;height:14px;border:1px solid #d0d0d0;background:#fff"></div>
<div class="t" style="left:41px;top:840px;font-size:14px;color:#222">X Component</div>
<div class="t" style="left:151px;top:840px;font-size:14px;color:#222">-30. N&nbsp; (ramped)</div>
<div class="a" style="left:146px;top:836px;width:1px;height:22px;background:#a8a8a8"></div>
<div class="a" style="left:17px;top:836px;width:472px;height:1px;background:#a8a8a8"></div>
<div class="a" style="left:21px;top:863px;width:15px;height:14px;border:1px solid #d0d0d0;background:#fff"></div>
<div class="t" style="left:41px;top:862px;font-size:14px;color:#222">Y Component</div>
<div class="t" style="left:151px;top:862px;font-size:14px;color:#222">0. N&nbsp; (ramped)</div>
<div class="a" style="left:146px;top:858px;width:1px;height:22px;background:#a8a8a8"></div>
<div class="a" style="left:17px;top:858px;width:472px;height:1px;background:#a8a8a8"></div>
<div class="a" style="left:21px;top:885px;width:15px;height:14px;border:1px solid #d0d0d0;background:#fff"></div>
<div class="t" style="left:41px;top:884px;font-size:14px;color:#222">Z Component</div>
<div class="t" style="left:151px;top:884px;font-size:14px;color:#222">0. N&nbsp; (ramped)</div>
<div class="a" style="left:146px;top:880px;width:1px;height:23px;background:#a8a8a8"></div>
<div class="a" style="left:17px;top:880px;width:472px;height:1px;background:#a8a8a8"></div>
<div class="t" style="left:21px;top:907px;font-size:14px;color:#222">Suppressed</div>
<div class="t" style="left:151px;top:907px;font-size:14px;color:#222">No</div>
<div class="a" style="left:146px;top:903px;width:1px;height:23px;background:#a8a8a8"></div>
<div class="a" style="left:17px;top:903px;width:472px;height:1px;background:#a8a8a8"></div>
<div class="a" style="left:467px;top:679px;width:21px;height:21px;background:#f0f0f0;border-left:1px solid #ddd;border-bottom:2px solid #aaa;border-right:2px solid #aaa"></div>
<svg class="a" style="left:472px;top:686px" width="10" height="6"><path d="M0 0 H10 L5 6 Z" fill="#111"/></svg>
<!-- VIEWPORT TOOLBAR -->
<div class="a" style="left:490px;top:171px;width:1430px;height:33px;background:#eeeef2"></div>
<div class="a" style="left:490px;top:171px;width:5px;height:837px;background:#eeeef2"></div>
<div class="a" style="left:507px;top:177px;width:8px;height:22px;background-image:radial-gradient(circle at 1.25px 1.25px,#a8a8ac 0.7px,transparent 1.1px),radial-gradient(circle at 3.75px 3.75px,#a8a8ac 0.7px,transparent 1.1px);background-size:5px 5px"></div>
<svg class="a" style="left:527px;top:179px" width="18" height="18" viewBox="0 0 18 18"><circle cx="7.5" cy="7.5" r="6" fill="none" stroke="#8c8c8c" stroke-width="1.8"/><path d="M12 12 L16.5 16.5" stroke="#8c8c8c" stroke-width="2"/><path d="M5 7.5 H10 M5 7.5 L7 5.5 M5 7.5 L7 9.5" stroke="#bbb" stroke-width="1"/></svg>
<svg class="a" style="left:555px;top:179px" width="18" height="18" viewBox="0 0 18 18"><circle cx="7.5" cy="7.5" r="6" fill="none" stroke="#8c8c8c" stroke-width="1.8"/><path d="M12 12 L16.5 16.5" stroke="#8c8c8c" stroke-width="2"/><path d="M5 7.5 H10 M10 7.5 L8 5.5 M10 7.5 L8 9.5" stroke="#bbb" stroke-width="1"/></svg>
<div class="a" style="left:580px;top:177px;width:1px;height:22px;background:#ccc"></div>
<svg class="a" style="left:590px;top:178px" width="17" height="18" viewBox="0 0 17 18"><path d="M1.5 5 L8.5 1.5 L15.5 5 L15.5 13 L8.5 16.5 L1.5 13 Z" fill="#6a6a6a" stroke="#333" stroke-width="1.2"/><path d="M1.5 5 L8.5 8.5 L15.5 5 M8.5 8.5 V16.5" fill="none" stroke="#333" stroke-width="1"/><path d="M1.5 5 L8.5 1.5 L15.5 5 L8.5 8.5 Z" fill="#9a9a9a"/></svg>
<div class="a" style="left:612px;top:174px;width:28px;height:27px;border:1px solid #5a9ae8;background:#e6eaf2"></div>
<svg class="a" style="left:618px;top:180px" width="16" height="15" viewBox="0 0 16 15"><path d="M1 4 L8 1 L15 4 L15 11 L8 14 L1 11 Z" fill="#b0b4b8"/><path d="M1 4 L8 7 L8 14 L1 11 Z" fill="#7a7a7a"/><path d="M8 7 L15 4 L15 11 L8 14 Z" fill="#c8ccd0"/></svg>
<svg class="a" style="left:645px;top:178px" width="19" height="19" viewBox="0 0 19 19"><path d="M10 5 L14 2 L18 5 L18 8 L14 10 L10 8 Z" fill="#fff" stroke="#333" stroke-width="1.4"/><path d="M1 12 L5 9.5 L9 12 L9 15 L5 17 L1 15 Z" fill="#c9a227" stroke="#333" stroke-width="1.4"/><path d="M3 7 Q4 4 7 3 M16 12 Q15 15 12 16" stroke="#333" fill="none" stroke-width="1.2"/></svg>
<div class="a" style="left:670px;top:177px;width:1px;height:22px;background:#ccc"></div>
<svg class="a" style="left:680px;top:178px" width="18" height="19" viewBox="0 0 18 19"><rect x="1" y="1" width="6" height="6" fill="#fff" stroke="#777" stroke-width="1.2"/><rect x="9" y="10" width="8" height="8" fill="#fff" stroke="#777" stroke-width="1.2"/><path d="M13 10 V18 M9 14 H17" stroke="#777" stroke-width="1.2"/></svg>
<div class="a" style="left:705px;top:177px;width:1px;height:22px;background:#ccc"></div>
<svg class="a" style="left:715px;top:179px" width="18" height="17" viewBox="0 0 18 17"><path d="M3 5 A7 6.5 0 0 1 15 5 M15 12 A7 6.5 0 0 1 3 12" fill="none" stroke="#444" stroke-width="1.8"/><path d="M1.5 8 L3 12 L5 9 M16.5 9 L15 5 L13 8" fill="none" stroke="#c9b020" stroke-width="1.6"/></svg>
<svg class="a" style="left:741px;top:185px" width="8" height="5"><path d="M0 0 H8 L4 5 Z" fill="#777"/></svg>
<svg class="a" style="left:756px;top:178px" width="19" height="19" viewBox="0 0 19 19"><path d="M9.5 1 L6.5 4.5 H12.5 Z M9.5 18 L6.5 14.5 H12.5 Z M1 9.5 L4.5 6.5 V12.5 Z M18 9.5 L14.5 6.5 V12.5 Z" fill="#c9b020"/><path d="M9.5 4 V15 M4 9.5 H15" stroke="#444" stroke-width="1.2" stroke-dasharray="1.5 1.5"/></svg>
<svg class="a" style="left:784px;top:178px" width="18" height="18" viewBox="0 0 18 18"><circle cx="7.5" cy="7.5" r="6" fill="#fff" stroke="#3a3a3a" stroke-width="1.8"/><circle cx="7.5" cy="7.5" r="3.5" fill="#f0d060"/><path d="M5.5 7.5 H9.5" stroke="#b08a10" stroke-width="1.2"/><path d="M12 12 L16.5 16.5" stroke="#3a3a3a" stroke-width="2.2"/></svg>
<svg class="a" style="left:811px;top:178px" width="18" height="18" viewBox="0 0 18 18"><circle cx="7.5" cy="7.5" r="6" fill="#fff" stroke="#3a3a3a" stroke-width="1.8"/><path d="M4.5 7.5 H10.5 M7.5 4.5 V10.5" stroke="#d4a820" stroke-width="2.4"/><path d="M12 12 L16.5 16.5" stroke="#3a3a3a" stroke-width="2.2"/></svg>
<svg class="a" style="left:838px;top:178px" width="18" height="18" viewBox="0 0 18 18"><circle cx="7.5" cy="7.5" r="6" fill="#fff" stroke="#3a3a3a" stroke-width="1.8"/><circle cx="7.5" cy="7.5" r="3.8" fill="#6a84c0"/><path d="M12 12 L16.5 16.5" stroke="#3a3a3a" stroke-width="2.2"/></svg>
<svg class="a" style="left:865px;top:178px" width="18" height="18" viewBox="0 0 18 18"><circle cx="7.5" cy="7.5" r="6" fill="#fff" stroke="#3a3a3a" stroke-width="1.8"/><circle cx="7.5" cy="7.5" r="3.8" fill="#3a9a6a"/><path d="M12 12 L16.5 16.5" stroke="#3a3a3a" stroke-width="2.2"/></svg>
<div class="a" style="left:892px;top:177px;width:1px;height:22px;background:#ccc"></div>
<div class="t tb" style="left:901px;top:181px">Select</div>
<svg class="a" style="left:949px;top:178px" width="19" height="19" viewBox="0 0 19 19"><rect x="1" y="1" width="7" height="7" fill="#ee1111"/><path d="M6 6 L9 15 L11 12 L15 17 L17 15 L12 10.5 L15 9 Z" fill="#333"/></svg>
<div class="t tb" style="left:971px;top:181px">Mode</div>
<svg class="a" style="left:1011px;top:185px" width="8" height="5"><path d="M0 0 H8 L4 5 Z" fill="#888"/></svg>
<div class="a" style="left:1030px;top:174px;width:27px;height:27px;border:1px solid #5a9ae8;background:#e6eaf2"></div>
<svg class="a" style="left:1033px;top:178px" width="21" height="20" viewBox="0 0 21 20"><path d="M2 9 V2 H8 M4 6 V4 H7" stroke="#333" stroke-width="1.3" fill="none"/><circle cx="5" cy="5" r="1.5" fill="#4a9a4a"/><path d="M11 9 V2 H19" stroke="#333" stroke-width="1.3" fill="none"/><path d="M12 3 H19 V6 H15 L13 8 Z" fill="#22dd22"/><path d="M2 18 V11 H8" stroke="#333" stroke-width="1.3" fill="none"/><path d="M3 12 H8 V14 H5 L3 16 Z" fill="#22cc22"/><path d="M13 12 L17 17" stroke="#555" stroke-width="1.3"/></svg>
<svg class="a" style="left:1062px;top:178px" width="19" height="19" viewBox="0 0 19 19"><path d="M1 4 L4 1 H15 L18 4 V18 H4 L1 15 Z" fill="#fff" stroke="#333" stroke-width="1.3"/><path d="M4 4 H18 M4 4 V18 M4 4 L1 1" stroke="#333" stroke-width="1.1" fill="none"/><circle cx="5" cy="5" r="2" fill="#4a8a4a"/><path d="M9 9 L13 14 M9 9 V12 M9 9 H12" stroke="#333" stroke-width="1.1"/></svg>
<svg class="a" style="left:1089px;top:178px" width="19" height="19" viewBox="0 0 19 19"><path d="M1 4 L4 1 H15 L18 4 V18 H4 L1 15 Z" fill="#fff" stroke="#333" stroke-width="1.3"/><path d="M1 4 L4 1 L7 1 L4 4 Z" fill="#22dd22"/><path d="M4 4 H18 M4 4 V18" stroke="#333" stroke-width="1.1" fill="none"/><path d="M9 9 L13 14 M9 9 V12 M9 9 H12" stroke="#333" stroke-width="1.1"/></svg>
<svg class="a" style="left:1117px;top:178px" width="19" height="19" viewBox="0 0 19 19"><path d="M1 4 L4 1 H15 L18 4 V18 H4 L1 15 Z" fill="#fff" stroke="#333" stroke-width="1.3"/><path d="M1.5 4 L4 1.5 H15 L17.5 4 Z" fill="#22dd22"/><path d="M4 4 H18 M4 4 V18" stroke="#333" stroke-width="1.1" fill="none"/><path d="M9 9 L13 14 M9 9 V12 M9 9 H12" stroke="#333" stroke-width="1.1"/></svg>
<svg class="a" style="left:1145px;top:178px" width="19" height="19" viewBox="0 0 19 19"><path d="M1 4 L4 1 H15 L18 4 V18 H4 L1 15 Z" fill="#22dd22" stroke="#333" stroke-width="1.3"/><path d="M4 4 H18 M4 4 V18" stroke="#333" stroke-width="1.1" fill="none"/><circle cx="11" cy="11" r="1.2" fill="#333"/></svg>
<svg class="a" style="left:1172px;top:178px" width="19" height="19" viewBox="0 0 19 19"><path d="M1 4 L4 1 H15 L18 4 V18 H4 L1 15 Z" fill="#fff" stroke="#999" stroke-width="1.3"/><path d="M4 4 H18 M4 4 V18 M8 4 V18 M13 4 V18 M4 11 H18" stroke="#aaa" stroke-width="1"/></svg>
<svg class="a" style="left:1200px;top:178px" width="19" height="19" viewBox="0 0 19 19"><path d="M1 4 L4 1 H15 L18 4 V18 H4 L1 15 Z" fill="#fff" stroke="#999" stroke-width="1.3"/><path d="M4 4 H18 M4 4 V18 M8 4 V18 M13 4 V18 M4 11 H18 M6 1 L3 4" stroke="#aaa" stroke-width="1"/></svg>
<svg class="a" style="left:1227px;top:178px" width="19" height="19" viewBox="0 0 19 19"><path d="M1 4 L4 1 H15 L18 4 V18 H4 L1 15 Z" fill="#ddd" stroke="#999" stroke-width="1.3"/><path d="M4 4 H18 M4 4 V18 M8 4 V18 M13 4 V18 M4 11 H18" stroke="#888" stroke-width="1"/></svg>
<svg class="a" style="left:1253px;top:178px" width="20" height="19" viewBox="0 0 20 19"><text x="0" y="7" font-family="Liberation Sans" font-size="6.5" fill="#aaa">X.Y.Z</text><path d="M9 9 L12 17 L13 14 L16 16" stroke="#d4a820" stroke-width="2.2" fill="none"/></svg>
<svg class="a" style="left:1282px;top:178px" width="19" height="19" viewBox="0 0 19 19"><path d="M1 1.5 H15 L18 5 L15 8.5 H1 Z" fill="#fff" stroke="#444" stroke-width="1.2"/><text x="3" y="7.5" font-family="Liberation Sans" font-size="6" font-weight="bold" fill="#444">100</text><path d="M8 9 L11 17 L12 14 L15 16" stroke="#d4a820" stroke-width="2.2" fill="none"/></svg>
<div class="a" style="left:1308px;top:177px;width:1px;height:22px;background:#ccc"></div>
<svg class="a" style="left:1317px;top:178px" width="18" height="18" viewBox="0 0 18 18"><rect x="1" y="1" width="16" height="16" fill="#e8c040" stroke="#333" stroke-width="1.4"/><path d="M6 3 H12" stroke="#7a5a10" stroke-width="1.2"/></svg>
<div class="t tb" style="left:1339px;top:181px">Clipboard</div>
<svg class="a" style="left:1406px;top:185px" width="7" height="4"><path d="M0 0 H7 L3.5 4 Z" fill="#888"/></svg>
<div class="t tb" style="left:1429px;top:181px">[ Empty ]</div>
<div class="a" style="left:1497px;top:177px;width:1px;height:22px;background:#ccc"></div>
<svg class="a" style="left:1505px;top:178px" width="20" height="19" viewBox="0 0 20 19"><path d="M1.5 6 L10 1.5 L18.5 6 L18.5 14 L10 18 L1.5 14 Z" fill="#fff" stroke="#444" stroke-width="1.3"/><path d="M1.5 6 L10 10 L18.5 6 M10 10 V18" fill="none" stroke="#444" stroke-width="1.2"/><path d="M2 6.5 L10 10.5 V17.5 L2 13.5 Z" fill="#22cc22"/><circle cx="10" cy="5" r="1.6" fill="#d4a020"/></svg>
<div class="t tb" style="left:1528px;top:181px">Extend</div>
<svg class="a" style="left:1575px;top:185px" width="7" height="4"><path d="M0 0 H7 L3.5 4 Z" fill="#888"/></svg>
<svg class="a" style="left:1597px;top:178px" width="18" height="20" viewBox="0 0 18 20"><path d="M9 1 A5 5 0 0 1 14 6 C14 9 9 14 9 14 C9 14 4 9 4 6 A5 5 0 0 1 9 1 Z" fill="#d4a820"/><circle cx="9" cy="6" r="1.6" fill="#fff"/><path d="M1 18 H17 M1 16 V18 M17 16 V18" stroke="#444" stroke-width="1.2"/></svg>
<div class="t tb" style="left:1618px;top:181px">Select By</div>
<svg class="a" style="left:1680px;top:185px" width="7" height="4"><path d="M0 0 H7 L3.5 4 Z" fill="#888"/></svg>
<svg class="a" style="left:1701px;top:178px" width="19" height="18" viewBox="0 0 19 18"><path d="M1 8 H6" stroke="#e08060" stroke-width="1.4"/><path d="M6 5 L10 2 L17 4 V14 L13 17 L6 15 Z" fill="#22cc22" stroke="#333" stroke-width="1.3"/><path d="M6 5 L13 7 L17 4 M13 7 V17" stroke="#333" stroke-width="1.1" fill="none"/></svg>
<div class="t tb" style="left:1724px;top:181px">Convert</div>
<svg class="a" style="left:1777px;top:185px" width="8" height="4"><path d="M0 0 H8 L4 4 Z" fill="#888"/></svg>
<svg class="a" style="left:1797px;top:191px" width="11" height="6"><path d="M0 0 H11 L5.5 6 Z" fill="#111"/></svg>
<!-- VIEWPORT -->
<div class="a" style="left:495px;top:204px;width:1425px;height:604px;background:#000;overflow:hidden">
<svg width="1425" height="604" viewBox="495 204 1425 604" style="position:absolute;left:0;top:0">
<defs>
<clipPath id="h1"><ellipse cx="1198" cy="371.5" rx="27.2" ry="27.5"/></clipPath>
<clipPath id="h2"><ellipse cx="1202" cy="511.7" rx="47" ry="47.3"/></clipPath>
<clipPath id="h3"><ellipse cx="1081.3" cy="577" rx="27.6" ry="27.6"/></clipPath>
<clipPath id="h4"><ellipse cx="1327" cy="587.5" rx="27.2" ry="27.5"/></clipPath>
<linearGradient id="rimg" x1="0" y1="0" x2="1" y2="0"><stop offset="0" stop-color="#6a6a6a"/><stop offset="0.47" stop-color="#8e8e8e"/><stop offset="0.85" stop-color="#c0c0c0"/><stop offset="1" stop-color="#cacaca"/></linearGradient>
<linearGradient id="wallg" x1="0" y1="0" x2="1" y2="1"><stop offset="0" stop-color="#a8a8a8"/><stop offset="0.6" stop-color="#d8d8d8"/><stop offset="1" stop-color="#e8e8e8"/></linearGradient>
<linearGradient id="redg" x1="0" y1="0" x2="1" y2="1"><stop offset="0" stop-color="#ff2020"/><stop offset="0.6" stop-color="#ee2020"/><stop offset="1" stop-color="#b81818"/></linearGradient>
</defs>
<ellipse cx="1212.5" cy="499.5" rx="240.5" ry="239" fill="url(#rimg)"/>
<ellipse cx="1201.5" cy="512" rx="240.5" ry="239" fill="#6e6e6e"/>
<ellipse cx="1198" cy="371.5" rx="27.2" ry="27.5" fill="url(#redg)"/>
<ellipse cx="1209" cy="359" rx="27.2" ry="27.5" fill="#000" clip-path="url(#h1)"/>
<ellipse cx="1202" cy="511.7" rx="47" ry="47.3" fill="url(#wallg)"/>
<ellipse cx="1213" cy="499.2" rx="47" ry="47.3" fill="#000" clip-path="url(#h2)"/>
<ellipse cx="1081.3" cy="577" rx="27.6" ry="27.6" fill="url(#wallg)"/>
<ellipse cx="1092.3" cy="564.5" rx="27.6" ry="27.6" fill="#000" clip-path="url(#h3)"/>
<ellipse cx="1327" cy="587.5" rx="27.2" ry="27.5" fill="url(#redg)"/>
<ellipse cx="1338" cy="575" rx="27.2" ry="27.5" fill="#000" clip-path="url(#h4)"/>
<path d="M1253 579 L1263 572 L1265 577 L1283 577 L1283 582 L1265 582 L1263 586 Z" fill="#b01818"/>
<path d="M1283 568 H1303 L1307 579.5 L1303 590.5 H1283 Z" fill="#ff2a2a" stroke="#3a0000" stroke-width="1.2"/>
<!-- scale bar -->
<path d="M990 757 H1424 V768 H990" fill="none" stroke="#d8d8d8" stroke-width="2"/>
<!-- triad -->
<path d="M1813 714 V659" stroke="#1e8a1e" stroke-width="3.5"/>
<path d="M1813 641 L1805.5 661 H1820.5 Z" fill="#1e8a1e"/>
<path d="M1813 715 H1870" stroke="#dd1111" stroke-width="3.5"/>
<path d="M1888 717 L1868 709.5 V724.5 Z" fill="#dd1111"/>
<path d="M1813 715 L1797 736" stroke="#1010ee" stroke-width="3.5"/>
<path d="M1793 740 L1795 726 L1806 732 Z" fill="#1010ee"/>
<circle cx="1838.5" cy="691" r="7.5" fill="#20c8c8"/>
<circle cx="1836.5" cy="689" r="3" fill="#60e8e8"/>
</svg>
<div class="t" style="left:1316px;top:414px;font-size:12px;color:#2a8a2a">Y</div>
<div class="t" style="left:1403px;top:503px;font-size:12px;color:#aa2222">X</div>
<div class="t" style="left:18px;top:20px;font-size:14.2px;font-weight:bold;color:#fff;letter-spacing:0.18px">B: Static Structural</div>
<div class="t" style="left:18px;top:39px;font-size:14px;color:#fff">Force</div>
<div class="t" style="left:18px;top:58px;font-size:14px;color:#fff">Time: 1. s</div>
<div class="a" style="left:18px;top:93px;width:21px;height:21px;background:#ff3030;border:1.5px solid #fff"></div>
<div class="t" style="left:45px;top:95px;font-size:14px;color:#fff">Force: 30. N</div>
<div class="t" style="left:45px;top:114px;font-size:14.6px;color:#fff">Components: -30.,0.,0. N</div>
<div class="t" style="left:482px;top:536px;font-size:14px;color:#fff">0.00</div>
<div class="t" style="left:694px;top:536px;font-size:14px;color:#fff">50.00</div>
<div class="t" style="left:909px;top:536px;font-size:14.2px;color:#fff">100.00 (mm)</div>
<div class="t" style="left:586px;top:568px;font-size:14px;color:#fff">25.00</div>
<div class="t" style="left:804px;top:568px;font-size:14px;color:#fff">75.00</div>
</div>
<!-- GRAPH PANEL -->
<div class="a" style="left:495px;top:808px;width:1425px;height:6px;background:#eeeef2"></div>
<div class="a" style="left:495px;top:814px;width:1425px;height:24px;background:#eeeef2"></div>
<div class="a" style="left:495px;top:815px;width:2px;height:23px;background:#d0d0d4"></div>
<div class="a" style="left:495px;top:838px;width:1422px;height:143px;background:#fff"></div>
<div class="t" style="left:502px;top:818px;font-size:14.5px;color:#444">Graph</div>
<div class="a" style="left:547px;top:820px;width:1285px;height:8px;background-image:radial-gradient(circle at 1.25px 1.25px,#a8a8ac 0.7px,transparent 1.1px),radial-gradient(circle at 3.75px 3.75px,#a8a8ac 0.7px,transparent 1.1px);background-size:5px 5px"></div>
<svg class="a" style="left:1838px;top:822px" width="12" height="8"><path d="M1 1 H11 L6 7 Z" fill="#222"/></svg>
<svg class="a" style="left:1856px;top:817px" width="14" height="18" viewBox="0 0 14 18"><path d="M4.5 1.5 H9.5 M5 1.5 V11 M9 1.5 V11 M2 11 H12 M7 11 V17" stroke="#222" stroke-width="1.5" fill="none"/><rect x="5" y="2" width="2" height="9" fill="#222"/></svg>
<svg class="a" style="left:1877px;top:819px" width="15" height="14" viewBox="0 0 15 14"><rect x="1.5" y="1.5" width="12" height="11" fill="none" stroke="#222" stroke-width="1.5"/><path d="M1.5 2.2 H13.5" stroke="#222" stroke-width="1.5"/></svg>
<svg class="a" style="left:1897px;top:818px" width="14" height="14" viewBox="0 0 14 14"><path d="M2.5 2.5 L11.5 11.5 M11.5 2.5 L2.5 11.5" stroke="#222" stroke-width="1.6"/></svg>
<svg class="a" style="left:495px;top:838px" width="1425" height="143" viewBox="495 838 1425 143">
<path d="M550 900.5 H1891" stroke="#a4a4a4" stroke-width="1.2"/>
<path d="M559.5 869 V900" stroke="#c8c8c8" stroke-width="1"/>
<path d="M550 869.5 H559" stroke="#c8c8c8" stroke-width="1"/>
<path d="M1891.5 902 V912" stroke="#aaa" stroke-width="1"/>
<path d="M559 869.5 H1891" stroke="#2020c0" stroke-width="1.6" stroke-dasharray="4 3.5"/>
<path d="M589.0 870.3 H641.0 M641.0 871.5 H693.0 M693.0 872.7 H745.0 M745.0 873.9 H797.0 M797.0 875.1 H849.0 M849.0 876.3 H901.0 M901.0 877.5 H953.0 M953.0 878.7 H1005.0 M1005.0 879.9 H1057.0 M1057.0 881.2 H1109.0 M1109.0 882.4 H1161.0 M1161.0 883.6 H1213.0 M1213.0 884.8 H1265.0 M1265.0 886.0 H1317.0 M1317.0 887.2 H1369.0 M1369.0 888.4 H1421.0 M1421.0 889.6 H1473.0 M1473.0 890.8 H1525.0 M1525.0 892.0 H1577.0 M1577.0 893.2 H1629.0 M1629.0 894.4 H1681.0 M1681.0 895.6 H1733.0 M1733.0 896.8 H1785.0 M1785.0 898.0 H1837.0 M1837.0 899.2 H1889.0 M1889.0 900.5 H1891.0 " fill="none" stroke="#d42020" stroke-width="1.6" stroke-dasharray="4 3.5"/>
<path d="M589 870 H641" stroke="#300" stroke-width="1.8" stroke-dasharray="4 3.5"/>
<rect x="555.5" y="865.5" width="7" height="7" fill="#3030d0"/><rect x="557.5" y="867.5" width="3" height="3" fill="#c8c8ff"/>
<path d="M1891 863 V901" stroke="#000" stroke-width="3"/>
<rect x="559" y="948" width="1331" height="17" fill="#0a78d7"/>
</svg>
<div class="t" style="left:533px;top:866px;font-size:12px;color:#222">0.</div>
<div class="t" style="left:522px;top:897px;font-size:12px;color:#222">-30.</div>
<div class="t" style="left:1879px;top:846px;font-size:12px;font-weight:bold;color:#222">1.</div>
<div class="t" style="left:1879px;top:916px;font-size:12px;color:#333">1.</div>
<div class="t" style="left:1221px;top:951px;font-size:12px;color:#fff">1</div>

<!-- BOTTOM TABS -->
<div class="a" style="left:0;top:981px;width:1920px;height:24px;background:#eeeef2"></div>
<div class="a" style="left:0;top:981px;width:57px;height:24px;background:#f5f5f7;border-right:1px solid #d8d8dc"></div>
<div class="t" style="left:8px;top:985px;font-size:14.5px;color:#3a78c8">Details</div>
<div class="t" style="left:66px;top:985px;font-size:14.5px;color:#444">Section Planes</div>
<div class="t" style="left:502px;top:985px;font-size:14.5px;color:#444">Messages</div>
<div class="t" style="left:582px;top:985px;font-size:14.5px;color:#444">Tabular Data</div>
<div class="a" style="left:670px;top:981px;width:54px;height:24px;background:#f5f5f7;border-left:1px solid #d8d8dc;border-right:1px solid #d8d8dc"></div>
<div class="t" style="left:678px;top:985px;font-size:14.5px;color:#3a78c8">Graph</div>

<!-- STATUS BAR -->
<div class="a" style="left:0;top:1005px;width:1920px;height:25px;background:#0078d4"></div>
<svg class="a" style="left:1272px;top:1008px" width="22" height="21" viewBox="0 0 22 21"><path d="M1 7 H20 V16 H7 L5 20 L4 16 H1 Z" fill="#f4dc58"/><ellipse cx="13" cy="8.5" rx="3.2" ry="5.5" fill="none" stroke="#111" stroke-width="2"/></svg>
<div class="t ts" style="left:1295px;top:1011px">No Messages</div>
<div class="t ts" style="left:1405px;top:1011px">No Selection</div>
<svg class="a" style="left:1515px;top:1013px" width="11" height="7"><path d="M0 7 L5.5 0 L11 7 Z" fill="#fff"/></svg>
<div class="t ts" style="left:1534px;top:1011px">Metric (mm, kg, N, s, mV, mA)</div>
<div class="t ts" style="left:1750px;top:1011px">Degrees</div>
<div class="t ts" style="left:1818px;top:1011px">RPM</div>
<div class="t ts" style="left:1864px;top:1011px">Celsius</div>

<!-- TASKBAR -->
<div class="a" style="left:0;top:1030px;width:1920px;height:50px;background:#1d1d1e"></div><div class="a" style="left:0;top:1030px;width:434px;height:50px;background:#2b2d32"></div>
<svg class="a" style="left:19px;top:1044px" width="22" height="22" viewBox="0 0 22 22"><path d="M0 3 L9 1.7 V10.3 H0 Z M10.3 1.5 L22 0 V10.3 H10.3 Z M0 11.7 H9 V20.3 L0 19 Z M10.3 11.7 H22 V22 L10.3 20.5 Z" fill="#fff"/></svg>
<svg class="a" style="left:79px;top:1044px" width="22" height="22" viewBox="0 0 22 22"><circle cx="13" cy="9" r="7" fill="none" stroke="#fff" stroke-width="1.6"/><path d="M8 14 L1.5 20.5" stroke="#fff" stroke-width="1.8"/></svg>
<svg class="a" style="left:138px;top:1041px" width="32" height="28" viewBox="0 0 32 28"><path d="M7 4 Q16 -1 25 5 Q31 11 29 18" fill="none" stroke="#fff" stroke-width="3" stroke-linecap="round"/><ellipse cx="16" cy="17" rx="14" ry="10" fill="none" stroke="#fff" stroke-width="2.6"/><path d="M3 21 L12 11 L16 15 L20 11 L29 21 Q22 27 16 27 Q8 27 3 21 Z" fill="#fff"/><circle cx="11" cy="8.5" r="1.8" fill="#fff"/><path d="M10 25 L17 17" stroke="#2b2d32" stroke-width="1.2"/></svg>
<svg class="a" style="left:202px;top:1042px" width="28" height="24" viewBox="0 0 28 24"><path d="M1 2 H10 L12 5 H27 V23 H1 Z" fill="#f0c040"/><rect x="1" y="7" width="26" height="16" fill="#f8d868"/><rect x="8" y="14" width="12" height="9" fill="#2a7ad8"/><rect x="11" y="17" width="6" height="4" fill="#f8d868"/></svg>
<svg class="a" style="left:264px;top:1041px" width="28" height="28" viewBox="0 0 28 28"><circle cx="14" cy="14" r="13.5" fill="#db4437"/><path d="M14 14 L2.3 7.3 A13.5 13.5 0 0 0 10.5 27.1 Z" fill="#0f9d58"/><path d="M14 14 L10.5 27.1 A13.5 13.5 0 0 0 27.5 14 Z" fill="#f4c20d"/><path d="M14 14 L27.5 14 A13.5 13.5 0 0 0 25.7 7.3 L14 7.3 Z" fill="#db4437"/><circle cx="14" cy="14" r="6.2" fill="#fff"/><circle cx="14" cy="14" r="5" fill="#4285f4"/></svg>
<div class="a" style="left:325px;top:1040px;width:30px;height:30px;background:linear-gradient(135deg,#d0d0d0,#9a9a9a)"></div>
<div class="t" style="left:327px;top:1048px;font-size:14px;font-weight:bold;color:#fff;letter-spacing:-0.5px">WB</div>
<svg class="a" style="left:386px;top:1040px" width="31" height="29" viewBox="0 0 31 29"><path d="M2 20 Q4 6 16 5 Q6 10 8 22 Z" fill="#e8a020"/><path d="M5 22 Q8 9 20 8 Q10 13 11 24 Z" fill="#d02020"/><path d="M9 24 Q12 12 24 11 Q14 16 14 26 Z" fill="#2a8ad8"/><circle cx="22" cy="9" r="7" fill="#3a9ae8"/><path d="M10 26 L30 16 L22 28 Z" fill="#22aa22"/></svg>
<div class="a" style="left:434px;top:1030px;width:61px;height:50px;background:#4a4a4c"></div>
<div class="a" style="left:449px;top:1040px;width:30px;height:30px;background:linear-gradient(90deg,#5a2a62,#8a4a92 50%,#5a2a62)"></div>
<div class="t" style="left:455px;top:1047px;font-size:16px;font-weight:bold;color:#f0e0f0">M</div>
<div class="a" style="left:253px;top:1077px;width:51px;height:3px;background:#9a9a9a"></div>
<div class="a" style="left:315px;top:1077px;width:51px;height:3px;background:#9a9a9a"></div>
<div class="a" style="left:377px;top:1077px;width:51px;height:3px;background:#9a9a9a"></div>
<div class="a" style="left:434px;top:1077px;width:61px;height:3px;background:#b8b8b8"></div>
<svg class="a" style="left:1603px;top:1049px" width="18" height="12" viewBox="0 0 18 12"><path d="M1.5 10.5 L9 3 L16.5 10.5" fill="none" stroke="#fff" stroke-width="1.5"/></svg>
<svg class="a" style="left:1631px;top:1047px" width="22" height="16" viewBox="0 0 22 16"><rect x="4" y="4" width="16" height="9" fill="none" stroke="#fff" stroke-width="1.4"/><rect x="20" y="6.5" width="1.6" height="4" fill="#fff"/><rect x="5.5" y="5.5" width="9" height="6" fill="#fff"/><path d="M1 1 L4 4" stroke="#fff"/></svg>
<svg class="a" style="left:1663px;top:1046px" width="19" height="17" viewBox="0 0 19 17"><path d="M1 8 A14 14 0 0 1 17 3 M4 11 A10 10 0 0 1 16 7.5 M7 14 A6 6 0 0 1 15.5 12" fill="none" stroke="#fff" stroke-width="1.3"/><circle cx="16" cy="15.5" r="1.3" fill="#fff"/></svg>
<svg class="a" style="left:1690px;top:1046px" width="23" height="18" viewBox="0 0 23 18"><path d="M1 6 H5 L10 1.5 V16.5 L5 12 H1 Z" fill="none" stroke="#fff" stroke-width="1.3"/><path d="M13 6 Q15 9 13 12 M16 3.5 Q20 9 16 14.5 M19 1 Q24 9 19 17" fill="none" stroke="#fff" stroke-width="1.3"/></svg>
<div class="t" style="left:1725px;top:1049px;font-size:14px;color:#fff">ENG</div>
<div class="t" style="left:1780px;top:1037px;font-size:14.5px;color:#fff">9:11 AM</div>
<div class="t" style="left:1770px;top:1060px;font-size:14.5px;color:#fff">21/04/2020</div>
<svg class="a" style="left:1867px;top:1044px" width="23" height="23" viewBox="0 0 23 23"><path d="M1.5 1.5 H21 V17 H12 L7 21 V17 H1.5 Z" fill="none" stroke="#fff" stroke-width="1.4"/><circle cx="17" cy="17" r="3.5" fill="#1e1c1c" stroke="#fff" stroke-width="1.2"/></svg>
<div class="a" style="left:1912px;top:1030px;width:1px;height:50px;background:#555"></div>
</body></html>
